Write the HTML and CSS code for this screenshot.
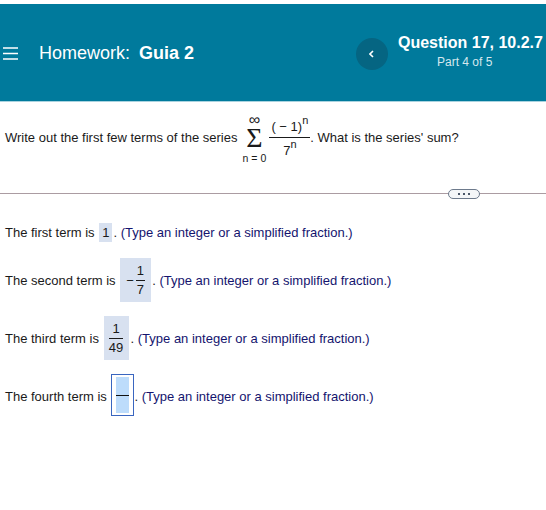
FILE: index.html
```html
<!DOCTYPE html>
<html lang="en">
<head>
<meta charset="utf-8">
<title>Homework: Guia 2</title>
<link rel="stylesheet" href="styles.css">
</head>
<body>
<header class="bar">
  <svg class="menu" width="15" height="13" viewBox="0 0 15 13" aria-hidden="true"><path d="M0 1h15M0 6.500h15M0 12h15" stroke="#fff" stroke-width="1.300" fill="none"/></svg>
  <h1 class="title">Homework:<b>Guia 2</b></h1>
  <div class="back"><svg width="6" height="8" viewBox="0 0 6 8" aria-hidden="true"><path d="M4 1 1 4l3 3" stroke="#fff" stroke-width="1.600" fill="none"/></svg></div>
  <div class="qinfo"><div class="qname">Question 17, 10.2.7</div><div class="qpart">Part 4 of 5</div></div>
</header>
<section class="question">
  <span>Write out the first few terms of the series</span>
  <span class="sum"><span class="lim inf">∞</span><span class="sigma">Σ</span><span class="lim">n = 0</span></span>
  <span class="frac big"><span class="num">( − 1)<sup>n</sup></span><span class="den">7<sup>n</sup></span></span>
  <span>. What is the series' sum?</span>
</section>
<div class="divider"><span class="more"><span class="dot"></span><span class="dot"></span><span class="dot"></span></span></div>
<main class="answers">
  <p class="row r1">The first term is <span class="ans">1</span><span class="tail">. <i>(Type an integer or a simplified fraction.)</i></span></p>
  <p class="row r2">The second term is <span class="ans"><span class="minus">−</span><span class="frac"><span class="num">1</span><span class="den">7</span></span></span><span class="tail">. <i>(Type an integer or a simplified fraction.)</i></span></p>
  <p class="row r3">The third term is <span class="ans"><span class="frac"><span class="num">1</span><span class="den">49</span></span></span><span class="tail">. <i>(Type an integer or a simplified fraction.)</i></span></p>
  <p class="row r4">The fourth term is <span class="box"><span class="fill"><span class="bar-line"></span></span></span><span class="tail">. <i>(Type an integer or a simplified fraction.)</i></span></p>
</main>
</body>
</html>
```
FILE: styles.css
```css
* { box-sizing: border-box; }
html, body { margin: 0; background: #fff; }
body { font-family: "Liberation Sans", Arial, sans-serif; font-size: 13px; color: #1a1a1a; }
.bar { margin-top: 4px; height: 98px; background: #007a9c; border-bottom: 1px solid #a9d3df; color: #fff; display: flex; align-items: center; padding-left: 3px; }
.menu { flex: none; margin-top: 1px; }
.title { margin: 2px 0 0 21px; font-size: 18px; font-weight: 400; flex: 1; }
.title b { margin-left: 9px; font-weight: 700; }
.back { width: 32px; height: 32px; border-radius: 50%; background: #056582; display: flex; align-items: center; justify-content: center; margin-top: 2px; }
.qinfo { width: 158px; padding-left: 10px; margin-top: -1px; white-space: nowrap; }
.qname { font-size: 16px; font-weight: 700; line-height: 20px; }
.qpart { font-size: 12px; line-height: 18px; color: #d5e8ee; padding-left: 39px; }
.question { display: flex; align-items: center; height: 71px; padding-left: 5px; white-space: pre; }
.sum { display: inline-flex; flex-direction: column; align-items: center; margin: 0 3px 0 5px; width: 24px; }
.lim { font-size: 10.500px; line-height: 14px; }
.inf { font-size: 16px; line-height: 10px; padding-top: 4px; }
.sigma { font-family: "Liberation Serif", serif; font-size: 28px; line-height: 26px; }
.frac { display: inline-flex; flex-direction: column; align-items: center; }
.num { border-bottom: 1px solid #1a1a1a; padding: 0 1px 1px; line-height: 16px; text-align: center; align-self: stretch; }
.den { padding-top: 1px; line-height: 16px; }
.big { margin-top: 3px; }
.big .num { padding: 0 2px 2px; }
.big .den { padding-top: 5px; }
.big sup { vertical-align: 7px; }
sup { font-size: 11px; line-height: 0; vertical-align: 5px; }
.divider { height: 1px; margin-top: 20px; background: #ab9ca2; display: flex; align-items: center; justify-content: flex-end; padding-right: 66px; }
.more { width: 32px; height: 10px; border: 1px solid #6d7a8c; border-radius: 5px; background: #f4f6f8; display: flex; align-items: center; justify-content: center; gap: 3px; }
.dot { width: 2px; height: 2px; background: #4a5668; }
.answers { padding: 0 0 0 5px; }
.row { margin: 0; display: flex; align-items: center; white-space: pre; }
.r1 { margin-top: 29px; height: 19px; }
.r2 { margin-top: 16px; height: 44px; }
.r3 { margin-top: 14px; height: 44px; }
.r4 { margin-top: 14px; height: 44px; }
.ans { background: #d8e1f0; display: inline-flex; align-items: center; justify-content: center; align-self: stretch; padding: 0 3px; min-width: 13px; margin-left: 1px; }
.r2 .ans { padding: 0 3px; width: 31px; }
.r3 .ans { width: 25px; padding: 0 4px; }
.minus { margin-right: 2px; }
.tail { margin-left: 2px; }
.r1 .tail, .r2 .tail { margin-left: 1px; }
.r4 .tail { margin-left: 0; }
.tail i { font-style: normal; color: #14146e; }
.box { width: 23px; height: 42px; align-self: flex-start; border: 1px solid #3a66c0; padding: 2px 4px; margin-left: 1px; display: flex; }
.fill { flex: 1; background: #bddcfb; display: flex; align-items: center; }
.bar-line { flex: 1; height: 1px; background: #111; }
```
